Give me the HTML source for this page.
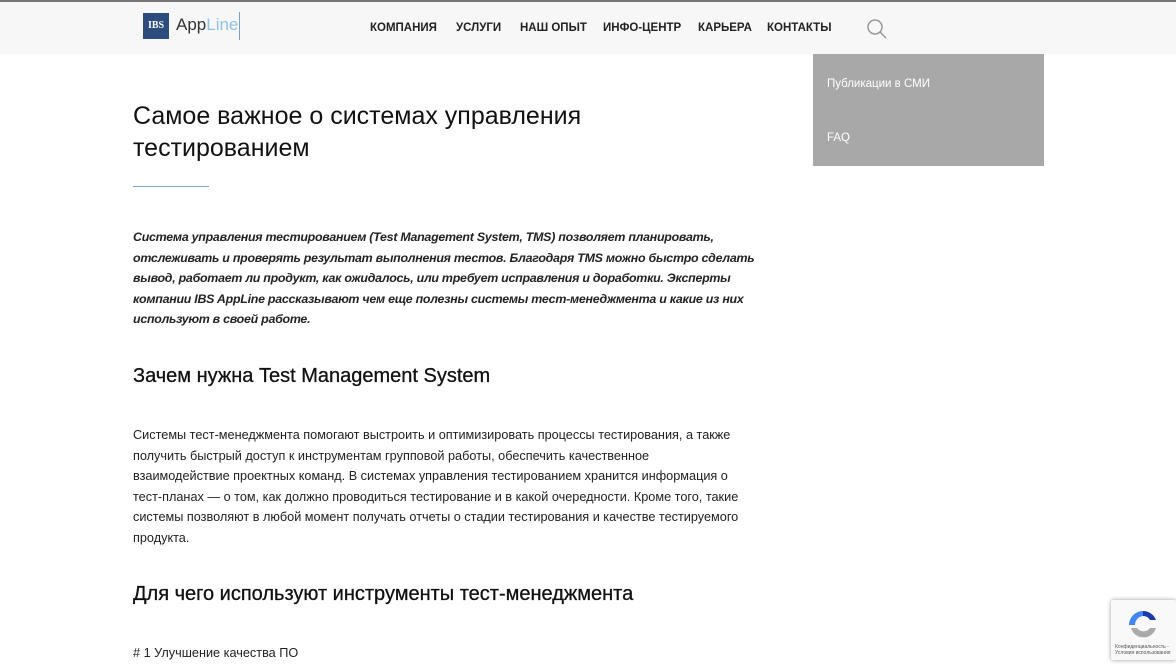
<!DOCTYPE html>
<html><head><meta charset="utf-8"><style>
*{margin:0;padding:0;box-sizing:border-box}
body{width:1176px;height:670px;overflow:hidden;background:#fff;font-family:"Liberation Sans","DejaVu Sans",sans-serif;color:#1a1a1a;position:relative}
.hdr{position:absolute;top:0;left:0;width:1176px;height:54px;background:#f7f7f7;border-top:2px solid #777;z-index:2}
.logo{position:absolute;left:143px;top:11px;width:26px;height:26px;background:#2d4c7e;color:#fff;font-weight:bold;font-size:10px;line-height:26px;text-align:center;font-family:"Liberation Serif",serif}
.app{position:absolute;left:176px;top:13px;font-size:17px;color:#333}
.app span{color:#8fc2e6}
.bar{position:absolute;left:239px;top:10px;width:1px;height:28px;background:#7aa0c8}
.nav{position:absolute;top:20px;font-size:11.5px;font-weight:bold;color:#222;letter-spacing:0}
.side{position:absolute;left:813px;top:54px;width:231px;height:112px;background:#a8a8a8;color:#fff;font-size:11.5px}
.side div{position:absolute;left:14px}
h1{position:absolute;left:133px;top:100px;font-size:25px;font-weight:normal;line-height:32px;color:#111;width:600px}
.ul{position:absolute;left:133px;top:186px;width:76px;height:1px;background:#7fa8cc}
.p{position:absolute;left:133px;width:612px;font-size:12.7px;line-height:20.5px;color:#222}
.it{font-style:italic;font-weight:bold;color:#222;font-size:12.4px;letter-spacing:-0.25px;width:630px}
h2{position:absolute;left:133px;font-size:20px;font-weight:normal;color:#111;-webkit-text-stroke:0.3px #111}
.rc{position:absolute;left:1111px;top:600px;width:65px;height:60px;background:#f9f9f9;box-shadow:0 0 4px #999;border-radius:2px}
</style></head><body>
<div class="hdr">
<div class="logo">IBS</div><div class="app">App<span>Line</span></div><div class="bar"></div>
<div class="nav" style="left:370px">КОМПАНИЯ</div>
<div class="nav" style="left:456px">УСЛУГИ</div>
<div class="nav" style="left:520px">НАШ ОПЫТ</div>
<div class="nav" style="left:603px">ИНФО-ЦЕНТР</div>
<div class="nav" style="left:698px">КАРЬЕРА</div>
<div class="nav" style="left:767px">КОНТАКТЫ</div>
<svg style="position:absolute;left:866px;top:16px" width="22" height="22" viewBox="0 0 22 22"><circle cx="9" cy="9" r="7" fill="none" stroke="#999" stroke-width="1.5"/><line x1="14" y1="14" x2="20" y2="20" stroke="#999" stroke-width="1.5"/></svg>
</div>
<div class="side"><div style="top:24px">Публикации в СМИ</div><div style="top:78px">FAQ</div></div>
<h1>Самое важное о системах управления тестированием</h1>
<div class="ul"></div>
<div class="p it" style="top:227px">Система управления тестированием (Test Management System, TMS) позволяет планировать, отслеживать и проверять результат выполнения тестов. Благодаря TMS можно быстро сделать вывод, работает ли продукт, как ожидалось, или требует исправления и доработки. Эксперты компании IBS AppLine рассказывают чем еще полезны системы тест-менеджмента и какие из них используют в своей работе.</div>
<h2 style="top:365px">Зачем нужна Test Management System</h2>
<div class="p" style="top:425px">Системы тест-менеджмента помогают выстроить и оптимизировать процессы тестирования, а также получить быстрый доступ к инструментам групповой работы, обеспечить качественное взаимодействие проектных команд. В системах управления тестированием хранится информация о тест-планах — о том, как должно проводиться тестирование и в какой очередности. Кроме того, такие системы позволяют в любой момент получать отчеты о стадии тестирования и качестве тестируемого продукта.</div>
<h2 style="top:583px">Для чего используют инструменты тест-менеджмента</h2>
<div class="p" style="top:643px">#&nbsp;1 Улучшение качества ПО</div>
<div class="rc"><svg style="position:absolute;left:15px;top:8px" width="34" height="34" viewBox="0 0 34 34"><path d="M17 3a14 14 0 0 1 13 9l-6 0a8 8 0 0 0-7-4z" fill="#1c3aa9"/><path d="M3 17A14 14 0 0 1 17 3v5a9 9 0 0 0-8 9z" fill="#4285f4"/><path d="M5 20a13 13 0 0 0 25 0h-6a8 8 0 0 1-13 0z" fill="#aaa"/></svg><div style="position:absolute;top:44px;left:4px;font-size:5px;color:#555;line-height:6px">Конфиденциальность -<br>Условия использования</div></div>
</body></html>
